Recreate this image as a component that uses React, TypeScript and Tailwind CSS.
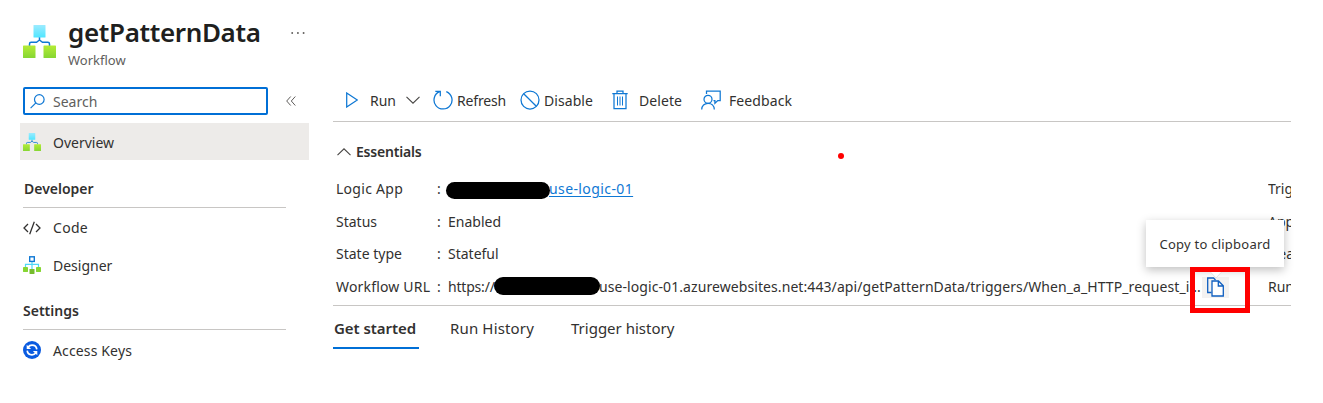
import React from "react";

function HierarchyIcon({ className, id }: { className: string; id: string }) {
  return (
    <svg viewBox="0 0 33 33" className={className}>
      <defs>
        <linearGradient id={id + "b"} x1="0" y1="0" x2="0" y2="1">
          <stop offset="0" stopColor="#9cebff" />
          <stop offset="1" stopColor="#50e6ff" />
        </linearGradient>
        <linearGradient id={id + "g"} x1="0" y1="0" x2="0" y2="1">
          <stop offset="0" stopColor="#b4ec36" />
          <stop offset="1" stopColor="#86d633" />
        </linearGradient>
      </defs>
      <path d="M16.500 12v3l-3 2.300H8.100q-1.600 0-1.600 1.600V21M16.500 15l3 2.300h5.400q1.600 0 1.600 1.600V21" fill="none" stroke="#0f78d4" strokeWidth="1.500" />
      <rect x="10.500" y="0" width="12" height="12.500" rx=".6" fill={`url(#${id}b)`} />
      <rect x="0" y="20.500" width="12.500" height="12.500" rx=".6" fill={`url(#${id}g)`} />
      <rect x="20.500" y="20.500" width="12.500" height="12.500" rx=".6" fill={`url(#${id}g)`} />
    </svg>
  );
}

function DesignerIcon() {
  return (
    <svg viewBox="0 0 18 18" className="-mt-[2px] size-[18px]">
      <path d="M9 5.500V13M2.500 11.500V8.300h13v3.200" fill="none" stroke="#50d8f5" strokeWidth="1.200" />
      <rect x="6.700" y=".8" width="4.600" height="4.600" fill="#fff" stroke="#0f78d4" strokeWidth="1.400" />
      <rect x="0" y="11" width="5" height="5" rx=".4" fill="#86d633" />
      <rect x="6.500" y="13" width="5" height="5" rx=".4" fill="#76bc2d" />
      <rect x="13" y="11" width="5" height="5" rx=".4" fill="#86d633" />
    </svg>
  );
}

function KeysIcon() {
  return (
    <svg viewBox="0 0 18 18" className="-mt-[2px] size-[18px]">
      <circle cx="9" cy="9" r="9" fill="#0a5be0" />
      <path d="M13.800 8.300C13.500 5.600 11.500 4.200 9 4.200c-1.700 0-3 .7-4 2M4.200 9.700c.3 2.700 2.300 4.100 4.800 4.100 1.700 0 3-.7 4-2" fill="none" stroke="#fff" strokeWidth="1.700" />
      <path d="M3.700 3.700v4.200h4.400zM14.300 14.300v-4.200H9.900z" fill="#fff" />
    </svg>
  );
}

function CodeIcon() {
  return (
    <svg viewBox="0 0 18 14" className="h-[14px] w-[18px]" fill="none" stroke="#323130" strokeWidth="1.300">
      <path d="M5 3 1 7l4 4M13 3l4 4-4 4M11.300.8 6.700 13.200" />
    </svg>
  );
}

function Chevron({ up = false, className = "" }: { up?: boolean; className?: string }) {
  return (
    <svg viewBox="0 0 14 8" className={`h-2 w-[14px] ${className}`} fill="none" stroke="#484644" strokeWidth="1.100">
      <path d={up ? "M.5 7.200 7 .8l6.500 6.400" : "M.5.8 7 7.200 13.500.8"} />
    </svg>
  );
}

function Toolbar() {
  const stroke = { fill: "none", stroke: "#0f78d4", strokeWidth: 1.25 };
  return (
    <div className="flex h-[37px] items-center border-b border-[#c8c6c4] pb-[4px] pl-[13px]">
      <svg viewBox="0 0 12 16" className="mr-3 -mt-[2px] h-4 w-3" {...stroke}>
        <path d="M.7 1v14L11.300 8z" />
      </svg>
      <span className="w-9">Run</span>
      <Chevron className="-mt-[2px]" />
      <svg viewBox="0 0 20 20" className="ml-[13px] mr-1 -mt-[2px] size-5" {...stroke}>
        <path d="M13.300 1.600A9 9 0 1 1 6.500 1.700M2.300 1.300h5v5" />
      </svg>
      <span className="w-[63px] tracking-[-0.150px]">Refresh</span>
      <svg viewBox="0 0 20 20" className="mr-1 -mt-[2px] size-5" {...stroke}>
        <circle cx="10" cy="10" r="9" />
        <path d="m3.700 3.700 12.600 12.600" />
      </svg>
      <span className="w-[68px] tracking-[0.070px]">Disable</span>
      <svg viewBox="0 0 16 20" className="mr-[11px] -mt-[2px] h-5 w-4" {...stroke}>
        <path d="M.3 3.500h15.400M5 3.200V1.200h6v2M2 3.500v15.200h12V3.500" />
        <path d="M5.500 6.500v9M8 6.500v9M10.500 6.500v9" strokeWidth="1" />
      </svg>
      <span className="w-[62px] tracking-[0.070px]">Delete</span>
      <svg viewBox="0 0 20 20" className="mr-2 -mt-[2px] size-5" {...stroke}>
        <path d="M5.500 4V1h13.700v9.500h-2.400l-2.900 2.700v-2.700h-1.400" />
        <circle cx="7" cy="9.300" r="4" />
        <path d="M.7 19.500c0-3.800 2.800-6.200 6.300-6.200s6.300 2.400 6.300 6.200" />
      </svg>
      <span className="tracking-[0.100px]">Feedback</span>
    </div>
  );
}

function Row({ label, labelClass = "", right, children }: { label: string; labelClass?: string; right: string; children: React.ReactNode }) {
  return (
    <div className="flex h-[32.600px] items-center pl-[3px]">
      <span className={`w-[101px] shrink-0 ${labelClass}`}>{label}</span>
      <span className="w-[11px] shrink-0">:</span>
      <div className="flex w-[820px] shrink-0 items-center">{children}</div>
      <span className="w-[23px] overflow-hidden">{right}</span>
    </div>
  );
}

function NavItem({ icon, children, className = "" }: { icon: React.ReactNode; children: React.ReactNode; className?: string }) {
  return (
    <div className={`flex h-[37px] items-center pl-[3px] ${className}`}>
      <span className="mr-3 flex w-[18px]">{icon}</span>
      <span>{children}</span>
    </div>
  );
}

export default function App() {
  return (
    <div className="relative h-[403px] w-[1323px] overflow-hidden whitespace-nowrap bg-white font-['Noto_Sans','Open_Sans',sans-serif] text-sm text-[#323130]">
      <header className="flex h-[85px] pl-[23px] pt-4">
        <HierarchyIcon id="h" className="mt-[9px] size-[33px]" />
        <div className="ml-3 w-[223px]">
          <h1 className="-mt-px text-[26px] font-semibold leading-[34px] tracking-[-0.350px] text-[#201f1e]">getPatternData</h1>
          <p className="mt-px text-[13px] leading-5 text-[#605e5c]">Workflow</p>
        </div>
        <svg viewBox="0 0 14 2" className="mt-[16px] h-[2px] w-[14px]" fill="#605e5c">
          <circle cx="1.200" cy="1" r=".95" />
          <circle cx="6.900" cy="1" r=".95" />
          <circle cx="12.600" cy="1" r=".95" />
        </svg>
      </header>

      <div className="flex">
        <aside className="w-[313px] shrink-0 pl-5 pt-[2px]">
          <div className="flex items-center pl-[3px]">
            <div className="flex h-7 w-[245px] items-center rounded-[2px] border-2 border-[#006fd6] pl-[5px] text-[#605e5c]">
              <svg viewBox="0 0 15 15" className="mr-2 size-[15px]" fill="none" stroke="#0f78d4" strokeWidth="1.200">
                <circle cx="9.300" cy="5.500" r="4.800" />
                <path d="M5.900 8.900.6 14.200" />
              </svg>
              <span className="mt-px">Search</span>
            </div>
            <svg viewBox="0 0 10 10" className="ml-[18px] size-[10px]" fill="none" stroke="#605e5c" strokeWidth="1">
              <path d="M4.700.5.7 5l4 4.500M9.300.5l-4 4.500 4 4.500" />
            </svg>
          </div>
          <NavItem className="mt-2 w-[289px] bg-[#edebe9] pt-[2px]" icon={<HierarchyIcon id="o" className="-mt-[2px] size-[18px]" />}>Overview</NavItem>
          <div className="ml-[3px] mt-[17px] h-[31px] w-[263px] border-b border-[#c8c6c4] pl-px pt-[2px] font-semibold leading-5">Developer</div>
          <NavItem className="mt-px" icon={<CodeIcon />}><span className="tracking-[0.300px]">Code</span></NavItem>
          <NavItem className="mt-px" icon={<DesignerIcon />}>Designer</NavItem>
          <div className="ml-[3px] mt-[15px] h-[31px] w-[263px] border-b border-[#c8c6c4] pt-[2px] font-semibold leading-5">Settings</div>
          <NavItem className="mt-[2px]" icon={<KeysIcon />}><span className="tracking-[0.140px]">Access Keys</span></NavItem>
        </aside>

        <main className="ml-5 w-[958px]">
          <Toolbar />
          <div className="flex h-[50px] items-center gap-[5px] pl-1 pt-[9px]">
            <Chevron up />
            <span className="font-semibold tracking-[-0.200px]">Essentials</span>
          </div>
          <section className="h-[134px] border-b border-[#c8c6c4] pt-px">
            <Row label="Logic App" labelClass="tracking-[0.280px]" right="Trig">
              <span className="relative z-10 -ml-[2px] mt-[3px] h-[17px] w-[104px] rounded-full bg-black" />
              <a className="-ml-px tracking-[0.400px] text-[#0f78d4] underline underline-offset-2">use-logic-01</a>
            </Row>
            <Row label="Status" right="App">
              <span>Enabled</span>
            </Row>
            <Row label="State type" right="Hea">
              <span>Stateful</span>
            </Row>
            <Row label="Workflow URL" labelClass="tracking-[0.180px]" right="Run">
              <span className="w-[46px] tracking-[-0.200px]">https://</span>
              <span className="relative z-10 -mt-[3px] h-[18px] w-[106px] shrink-0 rounded-full bg-black" />
              <span className="-ml-px w-[603px] tracking-[0.080px]">use-logic-01.azurewebsites.net:443/api/getPatternData/triggers/When_a_HTTP_request_i...</span>
              <span className="flex h-[21px] w-[27px] items-center justify-center bg-[#f3f2f1]">
                <svg viewBox="0 0 17 20" className="h-5 w-[17px]" fill="none" stroke="#0f5fc0" strokeWidth="1.300">
                  <path d="M4.500 15.500H.7V1h5.800l2 2" />
                  <path d="M5 4h6.500l4.800 4.700V19H5zM11.300 4v5h5" fill="#fff" />
                </svg>
              </span>
            </Row>
          </section>
          <nav className="flex h-[43px] text-[15px]">
            <span className="w-[86px] border-b-2 border-[#006fd6] pl-px pt-[12px] font-semibold tracking-[-0.050px]">Get started</span>
            <span className="ml-[31px] w-[121px] pt-[12px] tracking-[0.150px]">Run History</span>
            <span className="pt-[12px]">Trigger history</span>
          </nav>
        </main>
      </div>

      <div className="absolute left-[838px] top-[153px] size-[6px] rounded-full bg-[#ff0000]" />
      <div className="absolute left-[1146px] top-[220px] z-20 flex h-[47px] w-[138px] items-center justify-center bg-white pt-px text-[13px] tracking-[0.240px] shadow-[0_3px_9px_rgba(0,0,0,0.25)]">
        Copy to clipboard
      </div>
      <svg viewBox="0 0 20 12" className="absolute left-[1206px] top-[267px] z-20 h-3 w-5">
        <path d="M0 0h20L10 11z" fill="#fff" />
        <path d="m4 4.500 6 6.500 6-6.500" fill="none" stroke="#ddd" strokeWidth=".8" />
      </svg>
      <div className="absolute left-[1190px] top-[267px] z-30 h-[46px] w-[60px] border-[5px] border-[#ff0000]" />
    </div>
  );
}
